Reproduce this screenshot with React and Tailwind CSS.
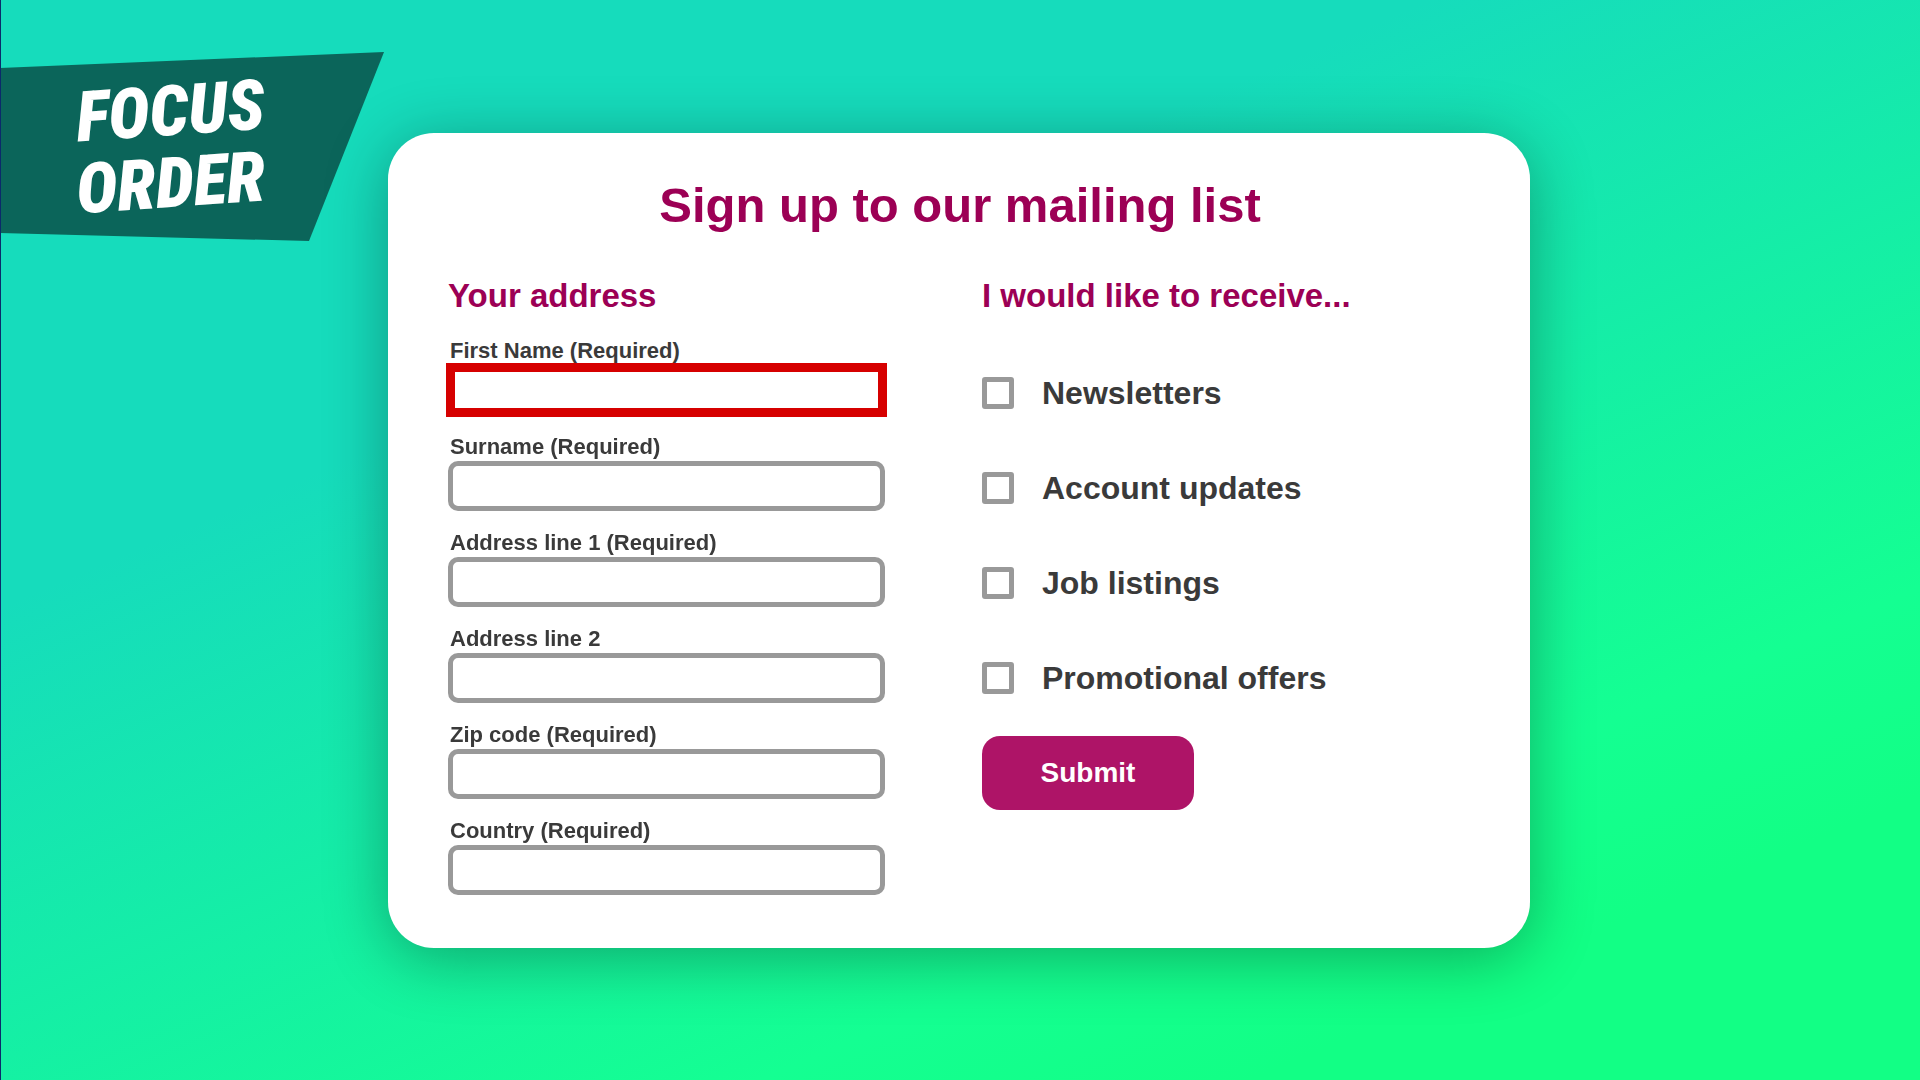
import React, { useState } from "react";

const fields = [
  { id: "firstName", label: "First Name (Required)", required: true },
  { id: "surname", label: "Surname (Required)", required: true },
  { id: "address1", label: "Address line 1 (Required)", required: true },
  { id: "address2", label: "Address line 2", required: false },
  { id: "zip", label: "Zip code (Required)", required: true },
  { id: "country", label: "Country (Required)", required: true },
];

const topics = [
  { id: "newsletters", label: "Newsletters" },
  { id: "updates", label: "Account updates" },
  { id: "jobs", label: "Job listings" },
  { id: "offers", label: "Promotional offers" },
];

const Banner = () => (
  <div className="absolute left-0 top-[52px] flex h-[189px] w-96 flex-col items-start justify-center bg-[#0b655a] pl-[76px] font-['Roboto_Condensed','Liberation_Sans_Narrow','Liberation_Sans',sans-serif] text-[70px] leading-[72px] font-black text-white italic [clip-path:polygon(0_16px,100%_0,309px_100%,0_181px)]">
    <span className="-rotate-4">FOCUS</span>
    <span className="-rotate-4">ORDER</span>
  </div>
);

const TextField = ({ id, label, required, autoFocus }) => (
  <div className="flex flex-col gap-0.5">
    <label htmlFor={id} className="pl-0.5 text-[22px] leading-6">
      {label}
    </label>
    <input
      id={id}
      name={id}
      type="text"
      required={required}
      autoFocus={autoFocus}
      className="h-[50px] w-full rounded-[10px] border-5 border-[#999] bg-white px-3 text-[22px] caret-transparent focus:rounded-none focus:outline-9 focus:-outline-offset-7 focus:outline-[#d60000]"
    />
  </div>
);

const App = () => {
  const [selected, setSelected] = useState([]);

  const toggle = (id) => {
    setSelected((prev) =>
      prev.includes(id) ? prev.filter((t) => t !== id) : [...prev, id]
    );
  };

  return (
    <div className="relative flex min-h-screen items-center justify-center bg-[linear-gradient(157deg,#16dcbc_32%,#14ff92_74%,#12ff85_85%)] pr-0.5 font-['Liberation_Sans',Arial,sans-serif] font-bold text-[#3a3a3a]">
      <div className="absolute inset-y-0 left-0 z-10 w-px bg-[#0b2a6b]" />
      <Banner />

      <main className="relative w-full max-w-[1142px] rounded-[46px] bg-white pt-11 pr-[58px] pb-[53px] pl-[60px] shadow-[0_10px_64px_rgba(0,0,0,0.32)]">
        <h1 className="text-center text-[49px] leading-14 text-[#9c0055]">
          Sign up to our mailing list
        </h1>

        <form
          className="mt-[43px] grid grid-cols-[437fr_490fr] gap-x-[97px]"
          onSubmit={(e) => e.preventDefault()}
        >
          <section>
            <h2 className="text-[33px] leading-10 text-[#9c0055]">
              Your address
            </h2>
            <div className="mt-[23px] flex flex-col gap-5">
              {fields.map((field, i) => (
                <TextField key={field.id} {...field} autoFocus={i === 0} />
              ))}
            </div>
          </section>

          <section>
            <h2 className="text-[33px] leading-10 text-[#9c0055]">
              I would like to receive...
            </h2>
            <div className="mt-[59px] flex flex-col gap-[59px]">
              {topics.map((topic) => (
                <label
                  key={topic.id}
                  className="flex items-center gap-7 text-[32px] leading-9"
                >
                  <input
                    type="checkbox"
                    checked={selected.includes(topic.id)}
                    onChange={() => toggle(topic.id)}
                    className="size-8 appearance-none rounded-[3px] border-5 border-[#999] bg-white checked:bg-[#ae1467]"
                  />
                  {topic.label}
                </label>
              ))}
            </div>
            <button
              type="submit"
              className="mt-10 h-[74px] w-[212px] rounded-[18px] bg-[#ae1467] text-[28px] text-white"
            >
              Submit
            </button>
          </section>
        </form>
      </main>
    </div>
  );
};

export default App;
